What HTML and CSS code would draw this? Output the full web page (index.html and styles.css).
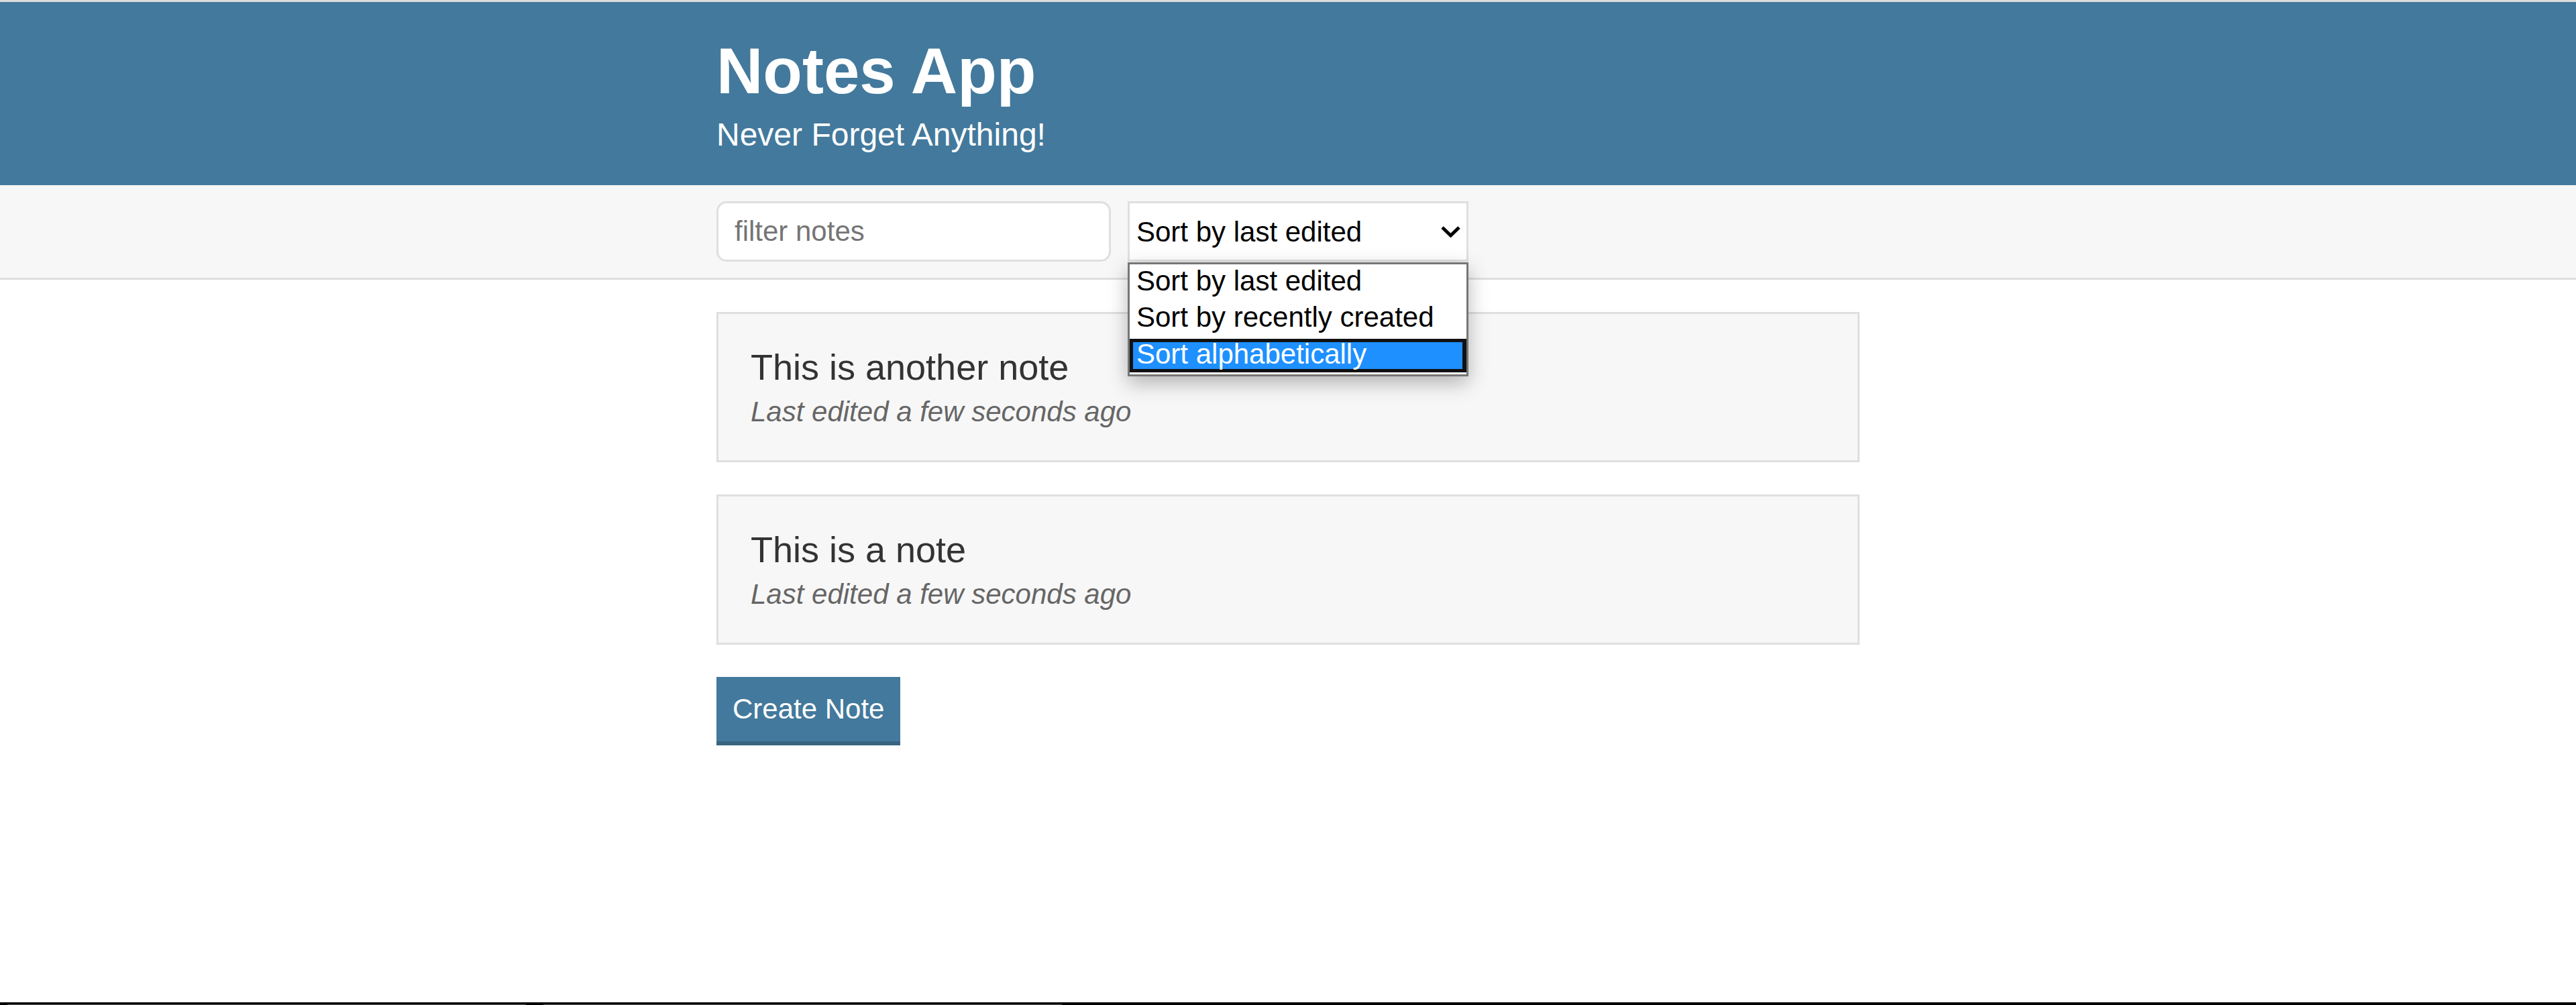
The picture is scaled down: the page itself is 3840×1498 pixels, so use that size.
FILE: index.html
```html
<!DOCTYPE html>
<html lang="en">
<head>
<meta charset="utf-8">
<title>Notes App</title>
<link rel="stylesheet" href="styles.css">
</head>
<body>
<div class="topline"></div>
<header class="header">
  <div class="container">
    <h1 class="header__title">Notes App</h1>
    <h2 class="header__subtitle">Never Forget Anything!</h2>
  </div>
</header>
<div class="actions">
  <div class="actions__container">
    <input class="input" type="text" placeholder="filter notes">
    <div class="dropdown-wrap">
      <select class="dropdown">
        <option>Sort by last edited</option>
        <option>Sort by recently created</option>
        <option>Sort alphabetically</option>
      </select>
      <svg class="dropdown__arrow" width="29" height="17" viewBox="0 0 29 17" aria-hidden="true">
        <path d="M2 2 L14.5 14 L27 2" fill="none" stroke="#000" stroke-width="5" stroke-linejoin="miter"/>
      </svg>
      <ul class="popup">
        <li class="popup__option">Sort by last edited</li>
        <li class="popup__option">Sort by recently created</li>
        <li class="popup__option popup__option--active">Sort alphabetically</li>
      </ul>
    </div>
  </div>
</div>
<main class="container">
  <div class="notes">
    <a class="list-item" href="#">
      <p class="list-item__title">This is another note</p>
      <p class="list-item__subtitle">Last edited a few seconds ago</p>
    </a>
    <a class="list-item" href="#">
      <p class="list-item__title">This is a note</p>
      <p class="list-item__subtitle">Last edited a few seconds ago</p>
    </a>
  </div>
  <button class="button">Create Note</button>
</main>
<div class="taskbar"><span class="taskbar__item"></span><span class="taskbar__item"></span></div>
</body>
</html>
```

FILE: styles.css
```css
* {
  box-sizing: border-box;
}

html, body {
  margin: 0;
  padding: 0;
}

body {
  background: #ffffff;
  color: #333333;
  font-family: "Liberation Sans", Arial, Helvetica, sans-serif;
  font-size: 48px;
}

.topline {
  height: 3px;
  background: #dcdcdc;
}

.container {
  max-width: 1800px;
  margin: 0 auto;
  padding: 0 48px;
}

/* Header */
.header {
  background: #43799c;
  color: #ffffff;
  padding: 48px 0;
}

.header__title {
  font-size: 96px;
  font-weight: bold;
  margin: 0 0 12px;
}

.header__subtitle {
  font-size: 48px;
  font-weight: 300;
  margin: 0;
}

/* Actions bar */
.actions {
  background: #f7f7f7;
  border-bottom: 3px solid #dedfe0;
  color: #333333;
  padding: 24px 0;
}

.actions__container {
  display: flex;
  align-items: center;
  max-width: 1800px;
  margin: 0 auto;
  min-height: 90px;
  padding: 0 48px;
}

.input {
  width: 588px;
  height: 90px;
  margin-right: 25px;
  padding: 12px 24px;
  border: 3px solid #dedfe0;
  border-radius: 15px;
  background: #ffffff;
  font-family: inherit;
  font-size: 42px;
  font-weight: 300;
  color: #333333;
  outline: none;
}

.input::placeholder {
  color: #757575;
}

.dropdown-wrap {
  position: relative;
  display: flex;
}

.dropdown {
  -webkit-appearance: none;
  appearance: none;
  width: 508px;
  height: 90px;
  padding: 0 50px 0 10px;
  border: 3px solid #dedfe0;
  border-radius: 0;
  background: #ffffff;
  color: #000000;
  font-family: inherit;
  font-size: 42px;
  font-weight: 300;
  margin: 0;
  outline: none;
}

.dropdown__arrow {
  position: absolute;
  top: 37px;
  right: 12px;
  pointer-events: none;
}

.popup {
  position: absolute;
  top: 91px;
  left: 0;
  width: 508px;
  margin: 0;
  padding: 0 0 3px;
  list-style: none;
  background: #ffffff;
  border: 3px solid #767676;
  box-shadow: 0 10px 28px rgba(0, 0, 0, 0.28);
  color: #000000;
  font-size: 42px;
  z-index: 10;
}

.popup__option {
  height: 54px;
  line-height: 50px;
  padding: 0 10px;
  white-space: nowrap;
}

.popup__option--active {
  height: 50px;
  margin-top: 3px;
  padding: 0 5px;
  line-height: 35px;
  border: 5px solid #111111;
  border-right-width: 6px;
  background: #1e90ff;
  color: #ffffff;
}

/* Notes */
.list-item {
  display: block;
  text-decoration: none;
  color: #333333;
  background: #f7f7f7;
  border: 3px solid #dedfe0;
  margin: 48px 0;
  padding: 48px;
}

.list-item__title {
  font-size: 54px;
  margin: 0 0 12px;
}

.list-item__subtitle {
  color: #666666;
  font-size: 42px;
  font-weight: 300;
  font-style: italic;
  margin: 0;
}

.button {
  display: block;
  background: #43799c;
  border: none;
  border-bottom: 6px solid #386582;
  color: #ffffff;
  font-family: inherit;
  font-size: 42px;
  font-weight: 300;
  padding: 24px;
  margin: 0;
  cursor: pointer;
}

/* Window frame strip at the bottom */
.taskbar {
  position: fixed;
  left: 0;
  right: 0;
  bottom: 0;
  height: 4px;
  background: #000000;
  display: flex;
  align-items: flex-end;
  gap: 26px;
  padding-left: 11px;
}

.taskbar__item {
  display: block;
  width: 773px;
  height: 1px;
  background: #5a5a5a;
}
```
